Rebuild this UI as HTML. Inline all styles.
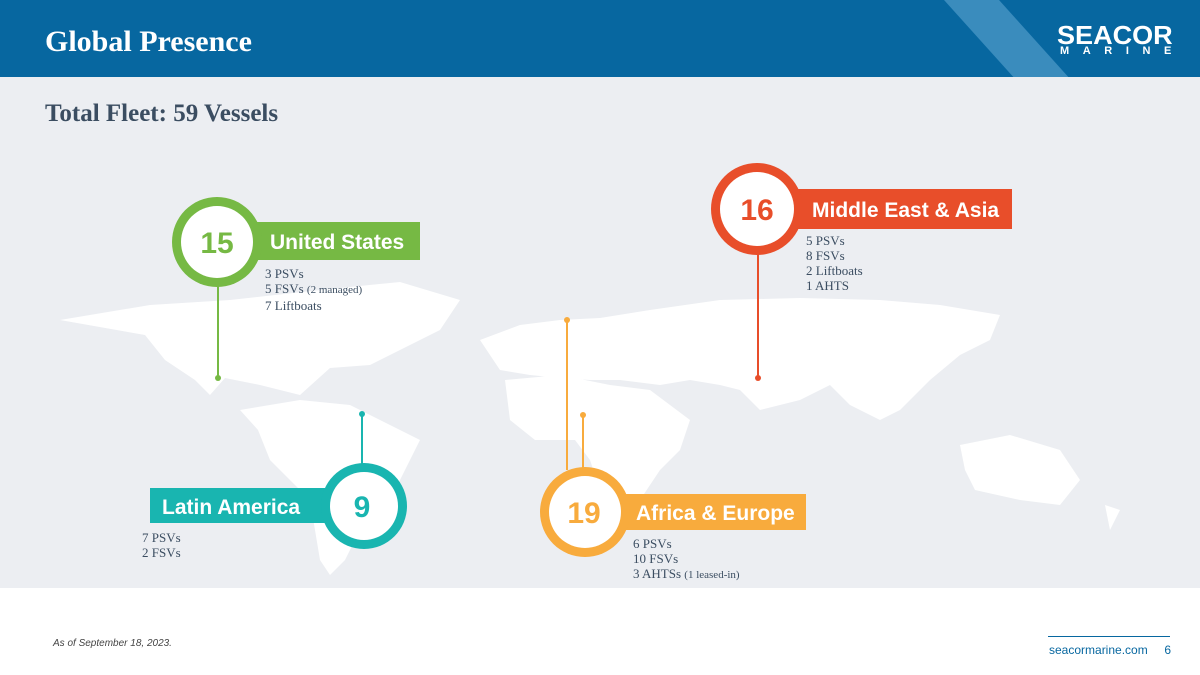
<!DOCTYPE html>
<html><head><meta charset="utf-8"><style>
*{margin:0;padding:0;box-sizing:border-box}
body{width:1200px;height:675px;position:relative;background:#fff;overflow:hidden;font-family:"Liberation Sans",sans-serif}
.hdr{position:absolute;left:0;top:0;width:1200px;height:77px;background:#0767a0;overflow:hidden}
.band{position:absolute;left:935px;top:-10px;width:55px;height:110px;background:#3a8cbd;transform:skewX(42deg);transform-origin:top left}
.title{position:absolute;left:45px;top:25px;color:#fff;font:bold 30px "Liberation Serif",serif}
.logo1{position:absolute;left:1057px;top:20px;color:#fff;font:900 26px "Liberation Sans",sans-serif;transform:scaleX(1.04);transform-origin:left}
.logo2{position:absolute;left:1060px;top:45px;color:#fff;font:bold 11px "Liberation Sans",sans-serif;letter-spacing:13.6px}
.gray{position:absolute;left:0;top:77px;width:1200px;height:511px;background:#eceef2}
.sub{position:absolute;left:45px;top:100px;color:#3b4d61;font:bold 25px "Liberation Serif",serif}
.list{position:absolute;color:#3b4d61;font:13px/15px "Liberation Serif",serif}
.list small{font-size:11px}
.foot{position:absolute;left:53px;top:638px;font:italic 10px "Liberation Sans",sans-serif;color:#444}
.url{position:absolute;left:1049px;top:643px;font:12px "Liberation Sans",sans-serif;color:#0767a0}
.fl{position:absolute;left:1048px;top:636px;width:122px;height:1px;background:#0767a0}
</style></head><body>
<div class="hdr"><div class="band"></div>
<div class="title">Global Presence</div>
<div class="logo1">SEACOR</div>
<div class="logo2">MARINE</div></div>
<div class="gray"></div>
<div class="sub">Total Fleet: 59 Vessels</div>
<svg style="position:absolute;left:0;top:0" width="1200" height="675">
<g fill="#fff">
<path d="M60 320 L150 305 L230 300 L320 290 L400 282 L460 300 L440 330 L400 350 L370 365 L330 368 L300 395 L260 385 L225 378 L210 395 L195 380 L165 360 L145 335 Z"/>
<path d="M240 410 L300 400 L350 405 L390 425 L420 440 L395 490 L365 520 L345 560 L330 575 L320 560 L310 500 L270 460 L258 430 Z"/>
<path d="M480 340 L520 325 L560 320 L600 318 L650 310 L720 300 L800 298 L880 300 L940 305 L1000 315 L990 340 L960 355 L930 380 L900 410 L880 420 L850 405 L830 385 L800 400 L760 410 L740 390 L720 385 L690 380 L660 385 L620 380 L590 380 L560 378 L530 375 L500 370 Z"/>
<path d="M505 380 L560 375 L610 385 L650 390 L690 420 L680 450 L660 470 L640 500 L620 520 L600 490 L590 460 L575 440 L535 440 L510 420 Z"/>
<path d="M960 445 L1010 435 L1060 450 L1080 480 L1060 505 L1020 500 L975 490 L965 470 Z"/>
<path d="M1105 505 L1120 510 L1110 530 Z"/>
</g>
<g fill="#fff">
<rect x="245" y="222" width="175" height="38" fill="#76b944"/>
<circle cx="217" cy="242" r="45" fill="#76b944"/><circle cx="217" cy="242" r="36"/>
<rect x="217" y="285" width="2" height="93" fill="#76b944"/><circle cx="218" cy="378" r="3" fill="#76b944"/>
<rect x="790" y="189" width="222" height="40" fill="#e84e2a"/>
<circle cx="757" cy="209" r="46" fill="#e84e2a"/><circle cx="757" cy="209" r="37"/>
<rect x="757" y="253" width="2" height="125" fill="#e84e2a"/><circle cx="758" cy="378" r="3" fill="#e84e2a"/>
<rect x="150" y="488" width="185" height="35" fill="#19b5b0"/>
<circle cx="364" cy="506" r="43" fill="#19b5b0"/><circle cx="364" cy="506" r="34"/>
<rect x="361" y="414" width="2" height="52" fill="#19b5b0"/><circle cx="362" cy="414" r="3" fill="#19b5b0"/>
<rect x="610" y="494" width="196" height="36" fill="#f8ab3d"/>
<circle cx="585" cy="512" r="45" fill="#f8ab3d"/><circle cx="585" cy="512" r="36"/>
<rect x="566" y="320" width="2" height="150" fill="#f8ab3d"/><circle cx="567" cy="320" r="3" fill="#f8ab3d"/>
<rect x="582" y="415" width="2" height="55" fill="#f8ab3d"/><circle cx="583" cy="415" r="3" fill="#f8ab3d"/>
</g>
<g font-family="Liberation Sans" font-weight="bold" text-anchor="middle" font-size="30">
<text x="217" y="253" fill="#76b944">15</text>
<text x="757" y="220" fill="#e84e2a">16</text>
<text x="362" y="517" fill="#19b5b0">9</text>
<text x="584" y="523" fill="#f8ab3d">19</text>
</g>
<g font-family="Liberation Sans" font-weight="bold" fill="#fff" font-size="21">
<text x="270" y="249">United States</text>
<text x="812" y="217">Middle East &amp; Asia</text>
<text x="162" y="514">Latin America</text>
<text x="636" y="520">Africa &amp; Europe</text>
</g>
</svg>
<div class="list" style="left:265px;top:266px">3 PSVs<br>5 FSVs <small>(2 managed)</small><br>7 Liftboats</div>
<div class="list" style="left:806px;top:233px">5 PSVs<br>8 FSVs<br>2 Liftboats<br>1 AHTS</div>
<div class="list" style="left:142px;top:530px">7 PSVs<br>2 FSVs</div>
<div class="list" style="left:633px;top:536px">6 PSVs<br>10 FSVs<br>3 AHTSs <small>(1 leased-in)</small></div>
<div class="foot">As of September 18, 2023.</div>
<div class="fl"></div>
<div class="url">seacormarine.com &nbsp;&nbsp;&nbsp; 6</div>
</body></html>
